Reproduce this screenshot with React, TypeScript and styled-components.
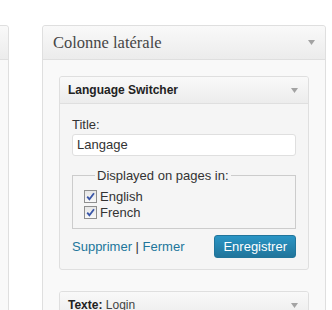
import React from "react";
import styled, { createGlobalStyle } from "styled-components";

const GlobalStyle = createGlobalStyle`
  html, body {
    margin: 0;
    padding: 0;
    background: #fff;
    height: 310px;
    overflow: hidden;
  }
  body {
    font-family: "Liberation Sans", Arial, sans-serif;
    font-size: 13px;
    color: #333;
  }
`;

const Arrow: React.FC = () => (
  <ArrowIcon width="7" height="5" viewBox="0 0 7 5">
    <path d="M0 0h7L3.5 5z" fill="#a3a3a3" />
  </ArrowIcon>
);

const Check: React.FC<{ label: string }> = ({ label }) => (
  <CheckRow>
    <CheckBox>
      <svg width="11" height="11" viewBox="0 0 11 11">
        <path
          d="M2.2 5.6l2.2 2.6 4.6-6"
          fill="none"
          stroke="#3a56a8"
          strokeWidth="1.8"
        />
      </svg>
    </CheckBox>
    {label}
  </CheckRow>
);

const App: React.FC = () => (
  <>
    <GlobalStyle />
    <Page>
      <SideHolder>
        <HolderHead />
      </SideHolder>
      <Holder>
        <HolderHead>
          <HolderTitle>Colonne latérale</HolderTitle>
          <Arrow />
        </HolderHead>
        <HolderBody>
          <Widget>
            <WidgetHead>
              <WidgetTitle>Language Switcher</WidgetTitle>
              <Arrow />
            </WidgetHead>
            <WidgetBody>
              <FieldLabel>Title:</FieldLabel>
              <TextInput>Langage</TextInput>
              <Fieldset>
                <Legend>Displayed on pages in:</Legend>
                <Check label="English" />
                <Check label="French" />
              </Fieldset>
              <Actions>
                <span>
                  <Link>Supprimer</Link> | <Link>Fermer</Link>
                </span>
                <SaveButton>Enregistrer</SaveButton>
              </Actions>
            </WidgetBody>
          </Widget>
          <Widget>
            <WidgetHead>
              <WidgetTitle>
                Texte: <Light>Login</Light>
              </WidgetTitle>
              <Arrow />
            </WidgetHead>
          </Widget>
        </HolderBody>
      </Holder>
    </Page>
  </>
);

export default App;

const Page = styled.div`
  display: flex;
  align-items: flex-start;
  gap: 33px;
  padding-top: 25px;
  height: 285px;
`;

const Holder = styled.div`
  width: 282px;
  height: 300px;
  flex-shrink: 0;
  border: 1px solid #dfdfdf;
  border-radius: 3px 3px 0 0;
  background: #f9f9f9;
`;

const SideHolder = styled(Holder)`
  width: 60px;
  margin-left: -53px;
`;

const HolderHead = styled.div`
  height: 33px;
  border-bottom: 1px solid #dfdfdf;
  background: linear-gradient(to bottom, #f9f9f9, #ececec);
  border-radius: 3px 3px 0 0;
  display: flex;
  align-items: center;
  justify-content: space-between;
  padding: 0 10px;
`;

const HolderTitle = styled.h3`
  margin: 0;
  font-family: "Liberation Serif", "DejaVu Serif", serif;
  font-weight: normal;
  font-size: 16.5px;
  color: #464646;
  padding-top: 1px;
`;

const ArrowIcon = styled.svg`
  display: block;
  flex-shrink: 0;
`;

const HolderBody = styled.div`
  padding: 16px 16px 0 16px;
  display: flex;
  flex-direction: column;
  gap: 21px;
`;

const Widget = styled.div`
  border: 1px solid #dfdfdf;
  border-radius: 3px;
  background: #f5f5f5;
  overflow: hidden;
`;

const WidgetHead = styled.div`
  height: 26px;
  display: flex;
  align-items: center;
  justify-content: space-between;
  padding: 0 10px 0 8px;
  background: linear-gradient(to bottom, #f9f9f9, #ececec);
  border-bottom: 1px solid #dfdfdf;
`;

const WidgetTitle = styled.h4`
  margin: 0;
  font-size: 12px;
  font-weight: bold;
  color: #222;
`;

const Light = styled.span`
  font-weight: normal;
  color: #444;
`;

const WidgetBody = styled.div`
  padding: 13px 12px 11px 12px;
  display: flex;
  flex-direction: column;
`;

const FieldLabel = styled.label`
  font-size: 13px;
  line-height: 16px;
  color: #333;
`;

const TextInput = styled.div`
  margin-top: 1px;
  height: 20px;
  border: 1px solid #dfdfdf;
  border-radius: 3px;
  background: #fff;
  padding: 0 4px;
  line-height: 20px;
  font-size: 13px;
  color: #333;
`;

const Fieldset = styled.fieldset`
  margin: 12px 0 0 0;
  padding: 5px 11px 8px 11px;
  border: 1px solid #ccc;
  display: flex;
  flex-direction: column;
`;

const Legend = styled.legend`
  margin-left: 11px;
  padding: 0 2px;
  font-size: 13px;
  color: #333;
`;

const CheckRow = styled.div`
  display: flex;
  align-items: center;
  gap: 3px;
  height: 16px;
  font-size: 13px;
  color: #333;
`;

const CheckBox = styled.span`
  width: 11px;
  height: 11px;
  border: 1px solid #8f8f8f;
  background: linear-gradient(to bottom, #e6e6e6, #f8f8f8);
  display: flex;
  align-items: center;
  justify-content: center;
`;

const Actions = styled.div`
  margin-top: 6px;
  display: flex;
  align-items: center;
  justify-content: space-between;
  color: #333;
`;

const Link = styled.a`
  color: #21759b;
  text-decoration: none;
`;

const SaveButton = styled.button`
  height: 23px;
  padding: 0 8px;
  border: 1px solid #21759b;
  border-radius: 3px;
  background: linear-gradient(to bottom, #2a95c5, #21759b);
  color: #fff;
  font-family: "Liberation Sans", Arial, sans-serif;
  font-size: 13px;
`;
